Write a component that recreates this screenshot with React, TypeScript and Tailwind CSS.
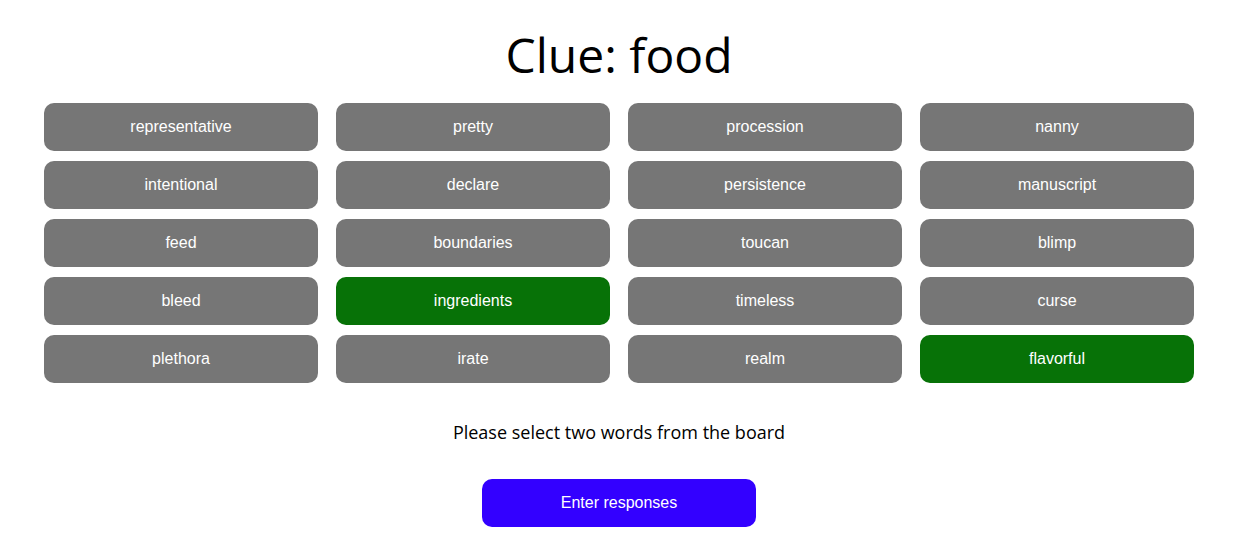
const words = [
  "representative",
  "pretty",
  "procession",
  "nanny",
  "intentional",
  "declare",
  "persistence",
  "manuscript",
  "feed",
  "boundaries",
  "toucan",
  "blimp",
  "bleed",
  "ingredients",
  "timeless",
  "curse",
  "plethora",
  "irate",
  "realm",
  "flavorful",
];

const selected = ["ingredients", "flavorful"];

export default function App() {
  return (
    <div className="w-[1238px] h-[546px] bg-white flex flex-col items-center">
      <h1 className="text-center text-[48px] leading-[48px] mt-[31px] text-black font-['Open_Sans',sans-serif]">
        Clue: food
      </h1>
      <div className="grid grid-cols-[repeat(4,274px)] gap-x-[18px] gap-y-[10px] mt-[24px]">
        {words.map((w) => (
          <button
            key={w}
            className={`h-[48px] rounded-[10px] text-white text-[16px] font-['Liberation_Sans',Arial,sans-serif] ${
              selected.includes(w) ? "bg-[#077207]" : "bg-[#767676]"
            }`}
          >
            {w}
          </button>
        ))}
      </div>
      <p className="text-center text-[18px] leading-[24px] mt-[37px] text-black font-['Open_Sans',sans-serif]">
        Please select two words from the board
      </p>
      <button className="mt-[35px] w-[274px] h-[48px] rounded-[10px] bg-[#3300ff] text-white text-[16px] font-['Liberation_Sans',Arial,sans-serif]">
        Enter responses
      </button>
    </div>
  );
}
